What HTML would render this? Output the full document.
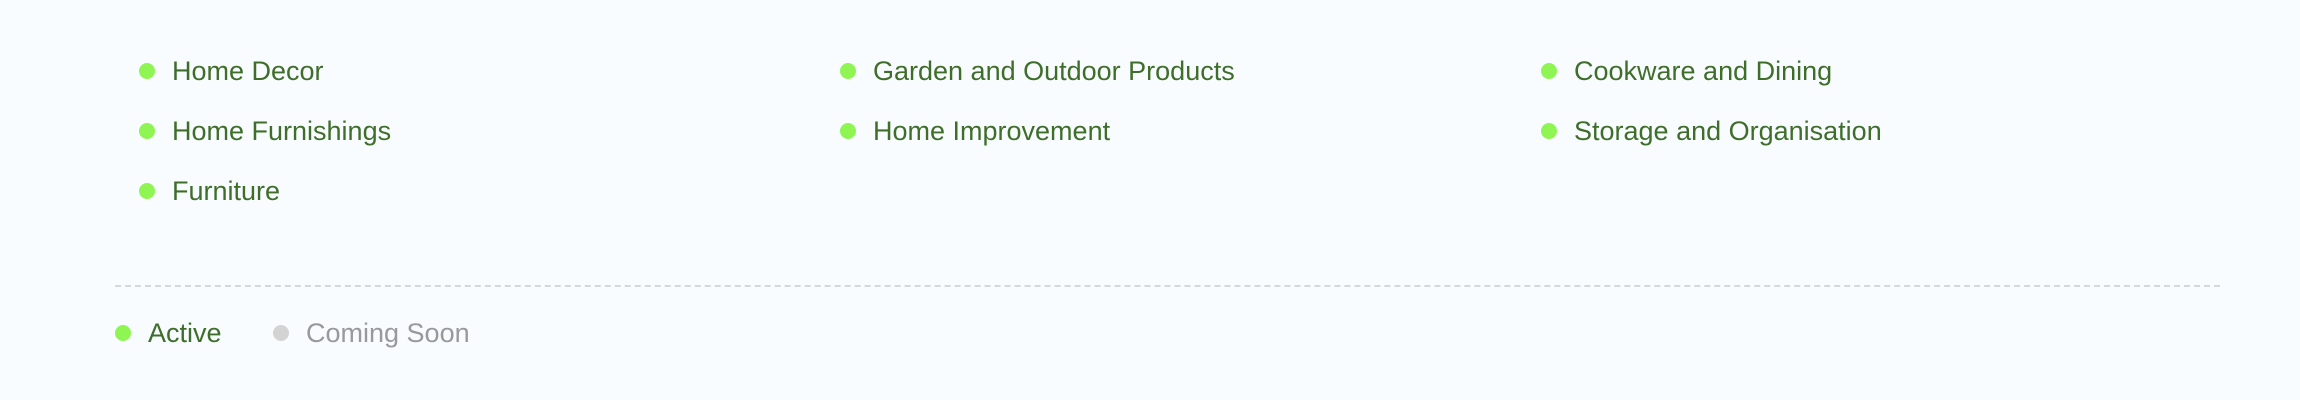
<!DOCTYPE html>
<html><head><style>
html,body{margin:0;padding:0;background:#f8fcff;width:2300px;height:400px;overflow:hidden;font-family:"Liberation Sans",Arial,sans-serif;}
.i{position:absolute;font-size:27px;color:#3f6e2a;line-height:30px;white-space:nowrap}
.d{position:absolute;width:16px;height:16px;border-radius:50%;background:#8ef552}
.g{background:#d3d3d3}
.hr{position:absolute;left:115px;width:2105px;top:285px;border-top:2px dashed #d4d8dc;height:0}
</style></head><body>
<div class="d" style="left:139px;top:63px"></div><div class="i" style="left:172px;top:56px">Home Decor</div>
<div class="d" style="left:139px;top:123px"></div><div class="i" style="left:172px;top:116px">Home Furnishings</div>
<div class="d" style="left:139px;top:183px"></div><div class="i" style="left:172px;top:176px">Furniture</div>
<div class="d" style="left:840px;top:63px"></div><div class="i" style="left:873px;top:56px">Garden and Outdoor Products</div>
<div class="d" style="left:840px;top:123px"></div><div class="i" style="left:873px;top:116px">Home Improvement</div>
<div class="d" style="left:1541px;top:63px"></div><div class="i" style="left:1574px;top:56px">Cookware and Dining</div>
<div class="d" style="left:1541px;top:123px"></div><div class="i" style="left:1574px;top:116px">Storage and Organisation</div>
<div class="hr"></div>
<div class="d" style="left:115px;top:325px"></div><div class="i" style="left:148px;top:318px">Active</div>
<div class="d g" style="left:273px;top:325px"></div><div class="i" style="left:306px;top:318px;color:#999">Coming Soon</div>
</body></html>
